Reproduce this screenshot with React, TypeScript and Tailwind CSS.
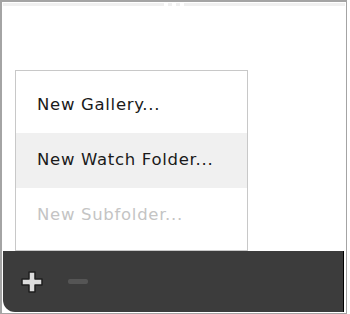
export default function App() {
  return (
    <div className="relative h-[314px] w-[350px] overflow-hidden bg-white">
      <div className="flex h-[314px] w-[347px] flex-col border-l-2 border-t-2 border-r border-b border-[#a4a4a4]">
        <div className="mx-[1px] mt-[1px] flex h-[3px] gap-[4px]">
          <div className="flex-1 bg-[#f0f0f0]" />
          <div className="w-[4px] bg-[#f0f0f0]" />
          <div className="w-[4px] bg-[#f0f0f0]" />
          <div className="flex-1 bg-[#f0f0f0]" />
        </div>
        <div className="flex-1" />
        <div className="ml-[1px] mr-[2px] mb-[1px] flex h-[61px] items-center gap-[24px] rounded-bl-[12px] border-r border-black bg-[#3c3c3c] pl-[17px]">
          <svg width="24" height="24" viewBox="0 0 24 24">
            <path
              d="M9 2h6v7h7v6h-7v7H9v-7H2V9h7z"
              fill="#dcdcdc"
              stroke="#1e1e1e"
              strokeWidth="1.5"
              strokeLinejoin="round"
            />
          </svg>
          <div className="h-[5px] w-[20px] rounded-[2px] bg-[#555555]" />
        </div>
      </div>

      <div
        className="absolute left-[15px] top-[70px] w-[233px] border border-[#c8c8c8] bg-white py-[7px] text-[16.5px] tracking-[0.7px] text-[#1a1a1a]"
        style={{ fontFamily: '"DejaVu Sans", Verdana, sans-serif' }}
      >
        <div className="flex h-[55px] items-center pl-[21px]">New Gallery...</div>
        <div className="flex h-[55px] items-center bg-[#f0f0f0] pl-[21px]">New Watch Folder...</div>
        <div className="flex h-[55px] items-center pl-[21px] text-[#c4c4c4]">New Subfolder...</div>
      </div>
    </div>
  );
}
